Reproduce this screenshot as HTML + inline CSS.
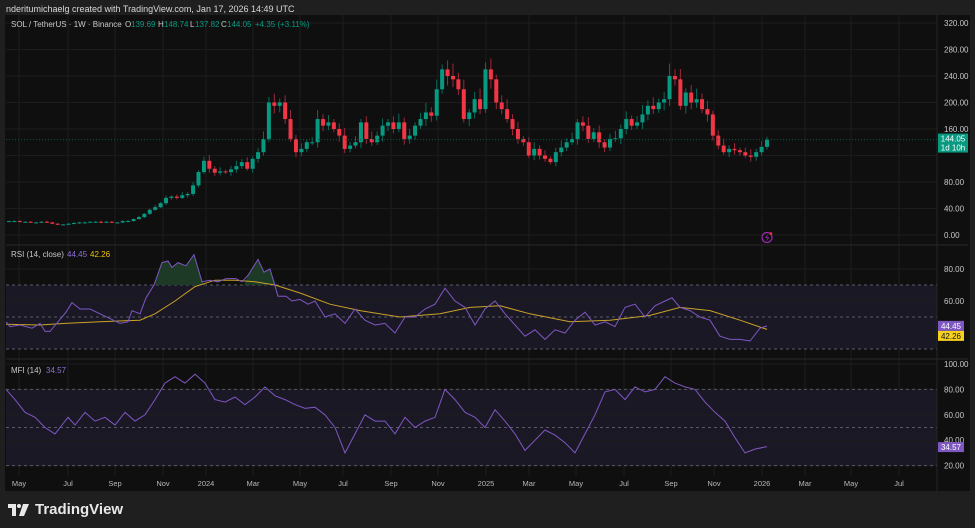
<!DOCTYPE html>
<html><head><meta charset="utf-8"><style>
html,body{margin:0;padding:0;background:#1f1f1f;width:975px;height:528px;overflow:hidden;font-family:"Liberation Sans",sans-serif}
#top{position:absolute;left:6px;top:4px;font-size:9px;color:#d8d8d8;z-index:5}
#wrap{position:absolute;left:0;top:0;width:975px;height:528px;overflow:hidden;z-index:1}
svg text{font-family:"Liberation Sans",sans-serif}
#logo{position:absolute;left:8px;top:501px;color:#e8e8e8;font-size:15px;font-weight:bold;display:flex;align-items:center;gap:5px;z-index:5}
</style></head><body>
<div id="wrap"></div>
<div id="top">nderitumichaelg created with TradingView.com, Jan 17, 2026 14:49 UTC</div>
<div id="logo"><svg width="22" height="12" viewBox="0 0 22 12"><path d="M0 0h8v12H4V4H0z" fill="#e8e8e8"/><circle cx="11" cy="2" r="2" fill="#e8e8e8"/><path d="M15 0h6l-5 12h-5z" fill="#e8e8e8"/></svg><span>TradingView</span></div>
<script>
var W=975,H=528,s=[];
function L(x1,y1,x2,y2,c,w,d){s.push('<line x1="'+x1+'" y1="'+y1+'" x2="'+x2+'" y2="'+y2+'" stroke="'+c+'" stroke-width="'+(w||1)+'"'+(d?' stroke-dasharray="'+d+'"':'')+'/>');}
function T(x,y,t,c,sz,a){s.push('<text x="'+x+'" y="'+y+'" fill="'+c+'" font-size="'+(sz||8)+'"'+(a?' text-anchor="'+a+'"':'')+'>'+t+'</text>');}
function R(x,y,w,h,c){s.push('<rect x="'+x+'" y="'+y+'" width="'+w+'" height="'+h+'" fill="'+c+'"/>');}
var AX=937;
R(0,0,W,H,'#1f1f1f');
R(5,15,965,476,'#0f0f0f');
var months=[[19,'May'],[68,'Jul'],[115,'Sep'],[163,'Nov'],[206,'2024'],[253,'Mar'],[300,'May'],[343,'Jul'],[391,'Sep'],[438,'Nov'],[486,'2025'],[529,'Mar'],[576,'May'],[624,'Jul'],[671,'Sep'],[714,'Nov'],[762,'2026'],[805,'Mar'],[851,'May'],[899,'Jul']];
months.forEach(function(m){L(m[0],15,m[0],476,'#1c1c1c');});
function py(p){return 235-p*0.6625;}
[320,280,240,200,160,120,80,40,0].forEach(function(p){L(6,py(p),AX,py(p),'#1c1c1c');if(p!=120)T(944,py(p)+3,p.toFixed(2),'#c8c8c8',8);});
var cl=[21,21,20,20,19,19,20,19,17,16,16,17,18,19,19,20,20,19,20,19,19,21,21,24,27,32,38,42,48,56,58,56,60,62,75,95,112,100,94,96,95,99,104,110,100,115,125,145,200,195,200,175,145,125,130,140,140,175,165,170,160,150,130,135,140,170,145,140,150,165,170,160,170,145,150,165,175,185,180,220,250,240,235,220,175,185,205,190,250,235,200,190,175,160,145,140,120,130,120,115,110,125,132,140,145,170,165,145,155,140,132,145,146,160,175,165,170,182,195,190,200,205,240,235,195,215,200,205,190,182,150,135,125,130,128,125,120,118,125,133,144];
var n=cl.length,x0=9,dx=(767-9)/(n-1),op=21;
for(var i=0;i<n;i++){var o=op,c=cl[i];var hi=Math.max(o,c)*(1.03+((i*7)%5)*0.012),lo=Math.min(o,c)*(0.97-((i*3)%4)*0.01);var col=c>=o?'#089981':'#f23645';var x=x0+i*dx;
L(x,py(hi),x,py(lo),c>=o?'#0a6b5c':'#a0283a',1);var t=py(Math.max(o,c)),b=py(Math.min(o,c));R(x-2,t,4,Math.max(1,b-t),col);op=c;}
L(6,py(144.05),AX,py(144.05),'#0b5a4d',1,'1 2');
R(AX+1,py(144.05)-6,30,19,'#089981');T(AX+16,py(144.05)+2,'144.05','#fff',8,'middle');T(AX+16,py(144.05)+11,'1d 10h','#fff',8,'middle');
s.push('<circle cx="767" cy="237.5" r="5" fill="none" stroke="#9c27b0" stroke-width="1.2"/><path d="M768 234.5l-3 3.5h2.5l-1 3 3-3.5h-2.5z" fill="#9c27b0"/><circle cx="771" cy="233.5" r="1.3" fill="#f23645"/>');
L(6,245,968,245,'#2a2a2a',1);
function ry(v){return 269-(v-80)*1.6;}
R(6,ry(70),AX-6,ry(30)-ry(70),'#1b1826');
[80,60].forEach(function(v){L(6,ry(v),AX,ry(v),'#1c1c1c');T(944,ry(v)+3,v.toFixed(2),'#c8c8c8',8);});
[70,50,30].forEach(function(v){L(6,ry(v),AX,ry(v),'#5a5a66',1,'3 3');});
var rsi=[[6,47],[10,44],[20,45],[32,43],[40,46],[45,41],[50,41],[58,47],[66,53],[72,59],[80,55],[90,55],[100,52],[110,49],[120,46],[128,47],[132,54],[140,52],[146,62],[154,70],[162,84],[168,85],[172,81],[178,84],[186,82],[194,89],[202,72],[210,73],[218,72],[226,74],[236,74],[242,72],[248,76],[258,86],[264,78],[270,80],[278,63],[286,63],[292,60],[300,61],[308,58],[315,60],[325,50],[335,52],[345,46],[355,55],[365,48],[375,45],[385,46],[395,40],[405,50],[415,50],[425,55],[435,58],[445,68],[455,60],[465,56],[475,45],[485,55],[495,60],[505,52],[515,45],[525,38],[535,42],[545,36],[555,42],[565,40],[575,48],[585,53],[595,45],[605,47],[615,44],[625,56],[635,58],[645,50],[655,57],[665,60],[672,62],[680,56],[690,54],[700,50],[710,48],[720,38],[730,36],[740,36],[750,35],[760,43],[767,44.45]];
var ma=[[6,45.5],[40,45],[65,46],[100,47],[140,48],[155,52],[175,60],[195,69],[215,73],[235,73],[255,72],[275,70],[300,65],[330,58],[360,54],[400,50],[440,52],[470,56],[500,57],[530,52],[570,47],[610,48],[650,51],[680,56],[710,54],[740,48],[767,42.26]];
function GP(a,b){var g='M'+a+' '+ry(70);rsi.forEach(function(p){if(p[0]>=a&&p[0]<=b)g+=' L'+p[0]+' '+ry(Math.max(70,p[1]));});return g+' L'+b+' '+ry(70)+'Z';}
s.push('<path d="'+GP(154,206)+'" fill="#1d3a26"/><path d="'+GP(244,276)+'" fill="#1d3a26"/>');
function PL(a,f,c){s.push('<polyline fill="none" stroke="'+c+'" stroke-width="1" points="'+a.map(function(p){return p[0]+','+f(p[1]).toFixed(1)}).join(' ')+'"/>');}
PL(ma,ry,'#c9a227');PL(rsi,ry,'#7e57c2');
T(11,257,'RSI (14, close)','#c8c8c8',8);T(67,257,'44.45','#8e6fd8',8);T(90,257,'42.26','#f0c400',8);
R(AX+1,ry(44.45)-5,26,10,'#7e57c2');T(AX+14,ry(44.45)+3,'44.45','#fff',8,'middle');
R(AX+1,ry(44.45)+5,26,10,'#f5d01f');T(AX+14,ry(44.45)+13,'42.26','#111',8,'middle');
L(6,359,968,359,'#2a2a2a',1);
function my(v){return 364+(100-v)*1.27;}
R(6,my(80),AX-6,my(20)-my(80),'#1b1826');
[100,80,60,40,20].forEach(function(v){L(6,my(v),AX,my(v),'#1c1c1c');T(944,my(v)+3,v.toFixed(2),'#c8c8c8',8);});
[80,50,20].forEach(function(v){L(6,my(v),AX,my(v),'#5a5a66',1,'3 3');});
var mfi=[[6,80],[15,72],[25,62],[35,58],[45,50],[55,45],[62,52],[68,58],[75,52],[85,62],[95,55],[105,58],[115,52],[125,62],[135,55],[145,60],[155,72],[165,85],[175,90],[185,85],[195,92],[205,85],[215,72],[225,70],[235,74],[245,68],[255,74],[265,82],[275,75],[285,72],[295,68],[305,65],[315,66],[325,60],[335,50],[345,30],[355,45],[365,60],[375,55],[385,55],[395,45],[405,58],[415,50],[425,55],[435,58],[445,80],[455,72],[465,62],[475,58],[485,50],[495,64],[505,55],[515,45],[525,32],[535,40],[545,48],[555,44],[565,38],[575,30],[585,45],[595,60],[605,78],[615,80],[625,72],[635,82],[645,78],[655,80],[665,90],[675,85],[685,82],[695,80],[705,70],[715,62],[725,55],[735,42],[745,30],[755,33],[767,35]];
PL(mfi,my,'#7e57c2');
T(11,373,'MFI (14)','#c8c8c8',8);T(46,373,'34.57','#8e6fd8',8);
R(AX+1,my(34.57)-5,26,10,'#7e57c2');T(AX+14,my(34.57)+3,'34.57','#fff',8,'middle');
months.forEach(function(m){T(m[0],486,m[1],'#b8b8b8',7.5,'middle');});
L(AX,15,AX,491,'#262626');
T(11,27,'SOL / TetherUS · 1W · Binance','#c8c8c8',8);
T(125,27,'O','#c8c8c8',8);T(131,27,'139.69','#089981',8);
T(158,27,'H','#c8c8c8',8);T(164,27,'148.74','#089981',8);
T(190,27,'L','#c8c8c8',8);T(195,27,'137.82','#089981',8);
T(221,27,'C','#c8c8c8',8);T(227,27,'144.05','#089981',8);
T(255,27,'+4.35 (+3.11%)','#089981',8);
document.getElementById('wrap').innerHTML='<svg xmlns="http://www.w3.org/2000/svg" width="975" height="528">'+s.join('')+'</svg>';
</script>
</body></html>
